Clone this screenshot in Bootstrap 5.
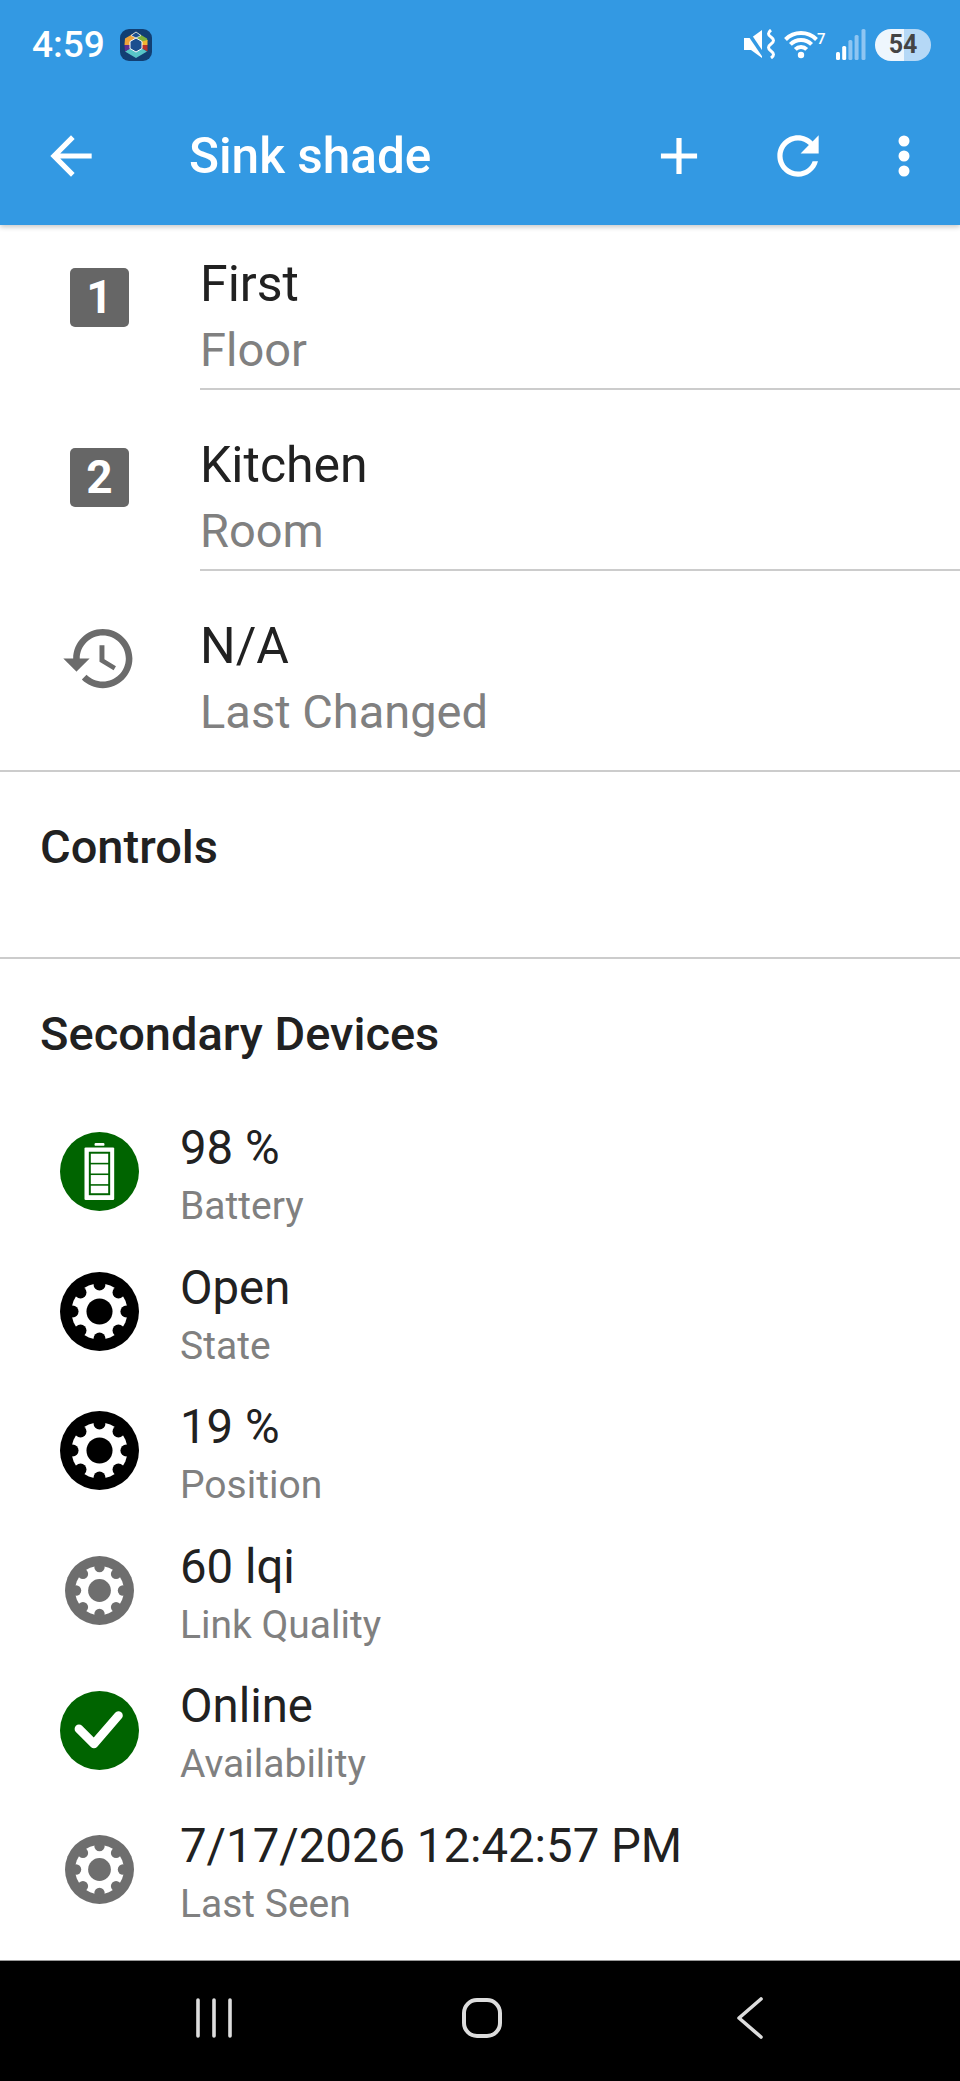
<!DOCTYPE html>
<html lang="en">
<head>
  <meta charset="UTF-8">
  <meta name="viewport" content="width=device-width, initial-scale=1.0">
  <title>Sink shade</title>
  <link href="https://cdn.jsdelivr.net/npm/bootstrap@5.3.1/dist/css/bootstrap.min.css" rel="stylesheet">
  <style>
    html, body { height: 100%; }
    body { font-family: Roboto, "Liberation Sans", sans-serif; color: #212121; background: #fff; width: 960px; height: 2081px; overflow: hidden; }
    .phone-wrap { height: 2081px; }

    /* app bar */
    .app-top { background: #3399e3; color: #fff; height: 225px; box-shadow: 0 2px 5px rgba(0,0,0,.22); position: relative; z-index: 2; }
    .status-row { height: 90px; padding: 29px 29px 0 32px; }
    .clock { font-size: 37px; font-weight: 500; line-height: 32px; width: 88px; }
    .batt-pill { width: 56px; height: 32px; border-radius: 16px; background: linear-gradient(90deg, #eef6fd 52%, #b5d8f6 52%); color: #444; font-size: 25px; font-weight: 700; line-height: 32px; text-align: center; }
    .tool-row { height: 135px; padding: 0 26px 4px 40px; }
    .page-title { font-size: 49.5px; font-weight: 500; line-height: 60px; margin: 0 0 0 87px; }
    .tool-btn { width: 62px; height: 62px; fill: #fff; }
    .gap-plus { margin-right: 57px; }
    .gap-refresh { margin-right: 68px; }
    .dots-icon { width: 14px; height: 62px; fill: #fff; margin-right: 23px; }

    /* detail rows */
    .detail-row { padding-left: 60px; }
    .detail-icon { width: 79px; flex: 0 0 79px; height: 79px; margin-right: 61px; }
    .num-box { width: 59px; height: 59px; border-radius: 5px; background: #666; color: #fff; font-size: 46px; font-weight: 700; line-height: 59px; text-align: center; }
    .hist-icon { width: 79px; height: 79px; fill: #6b6b6b; display: block; }
    .detail-text { padding-top: 43px; padding-bottom: 6px; border-bottom: 2px solid #ccc; }
    .detail-row:first-child .detail-text { padding-top: 27px; }
    .detail-row:first-child .detail-icon { margin-top: 33px; }
    .detail-row .detail-icon { margin-top: 48px; }
    .detail-row:last-child .detail-text { border-bottom: 0; padding-bottom: 26px; }
    .line-main { font-size: 50px; line-height: 65px; color: #212121; }
    .line-sub { font-size: 47px; line-height: 65px; color: #808080; }

    /* sections */
    .sect-block { border-top: 2px solid #ccc; padding: 45px 40px 0; }
    .sect-title { font-size: 47px; font-weight: 500; line-height: 60px; margin: 0; color: #212121; }
    .controls-block { height: 187px; }
    .device-list { margin-top: 38px; padding-left: 20px; }
    .device-row { height: 139.6px; }
    .device-slot { width: 79px; flex: 0 0 79px; margin-right: 41px; }
    .device-icon { display: block; }
    .disc-big { width: 79px; height: 79px; }
    .disc-small { width: 69px; height: 69px; }
    .grey-gear { color: #6e6e6e; }
    .device-text { padding-top: 17px; }
    .dev-main { font-size: 47.3px; line-height: 58px; color: #212121; }
    .dev-sub { font-size: 39px; line-height: 58px; color: #808080; }

    /* bottom nav */
    .nav-bottom { background: #000; height: 121px; border-top: 1px solid #999; padding: 0 0 7px 4px; }
    .nav-slot { width: 268px; }
    .nav-icon { stroke: #ddd; fill: none; display: block; }
  </style>
</head>

<body>
  <svg width="0" height="0" class="position-absolute">
    <symbol id="gear" viewBox="0 0 100 100">
      <circle cx="50" cy="50" r="50" fill="currentColor"/>
      <circle cx="50" cy="50" r="35.5" fill="#fff"/>
      <g fill="currentColor">
        <circle cx="50" cy="50" r="16.5"/>
        <circle cx="50" cy="16" r="7.5"/>
        <circle cx="50" cy="84" r="7.5"/>
        <circle cx="16" cy="50" r="7.5"/>
        <circle cx="84" cy="50" r="7.5"/>
        <circle cx="26" cy="26" r="7.5"/>
        <circle cx="74" cy="26" r="7.5"/>
        <circle cx="26" cy="74" r="7.5"/>
        <circle cx="74" cy="74" r="7.5"/>
      </g>
    </symbol>
  </svg>

  <div class="phone-wrap d-flex flex-column">
    <header class="app-top flex-shrink-0">
      <div class="status-row d-flex align-items-start">
        <span class="clock">4:59</span>
        <svg width="32" height="32" viewBox="0 0 32 32">
          <rect width="32" height="32" rx="9" fill="#123f73"/>
          <polygon points="5,9.5 16,3 16,9 10,12.5 10,16 4.5,16" fill="#f0a33a"/>
          <polygon points="16,3 27,9.5 27.5,12 22,13 16,9" fill="#7fb13c"/>
          <polygon points="11,6.5 16,3 21,6.5 16,9" fill="#1c4f8f" stroke="#fff" stroke-width=".7"/>
          <polygon points="27.5,11 27.5,16 22,16 22,12.5" fill="#f2b632"/>
          <polygon points="27.5,16 27.5,22.5 22,19.5 22,16" fill="#b8342c"/>
          <polygon points="27,22.5 16,29 5,22.5 10,19.5 16,23 22,19.5" fill="#58c5c8"/>
          <polygon points="4.5,16 10,16 10,19.5 5,22.5" fill="#5e2f92"/>
          <polygon points="16,9 22,12.5 22,19.5 16,23 10,19.5 10,12.5" fill="#1c4f8f" stroke="#fff" stroke-width="1"/>
        </svg>
        <div class="ms-auto d-flex align-items-start">
          <!-- mute + vibrate -->
          <svg width="32" height="30" viewBox="0 0 32 30" class="me-2">
            <path d="M0 9H7L18 1V29L7 21H0Z" fill="#fff"/>
            <line x1="1" y1="-1" x2="22" y2="30" stroke="#3399e3" stroke-width="3.5"/>
            <path d="M27 1q-5 4 0 7q5 3.5 0 7q-5 3.5 0 7q5 3.5 0 7" fill="none" stroke="#fff" stroke-width="3"/>
          </svg>
          <!-- wifi -->
          <svg width="44" height="30" viewBox="0 0 44 30" class="me-2">
            <g fill="none" stroke="#fff" stroke-width="4">
              <path d="M1.5 10.5A22 22 0 0 1 32.5 10.5"/>
              <path d="M6.4 15.4A15 15 0 0 1 27.6 15.4"/>
              <path d="M11.3 20.3A8 8 0 0 1 22.7 20.3"/>
            </g>
            <circle cx="17" cy="26" r="3.2" fill="#fff"/>
            <text x="33" y="14.5" font-size="15" font-weight="500" fill="#fff">7</text>
          </svg>
          <!-- signal -->
          <svg width="31" height="31" viewBox="0 0 31 31" class="me-2">
            <rect x="0" y="23" width="4" height="8" rx="1.5" fill="#fff"/>
            <rect x="6.2" y="17" width="4" height="14" rx="1.5" fill="#fff"/>
            <rect x="12.4" y="11" width="4" height="20" rx="1.5" fill="#8ec5f2"/>
            <rect x="18.6" y="6" width="4" height="25" rx="1.5" fill="#8ec5f2"/>
            <rect x="25.5" y="0" width="4" height="31" rx="1.5" fill="#8ec5f2"/>
          </svg>
          <div class="batt-pill">54</div>
        </div>
      </div>
      <div class="tool-row d-flex align-items-center">
        <svg class="tool-btn" viewBox="0 0 24 24"><path d="M20 11H7.83l5.59-5.59L12 4l-8 8 8 8 1.41-1.41L7.83 13H20v-2z"/></svg>
        <h1 class="page-title">Sink shade</h1>
        <svg class="tool-btn ms-auto gap-plus" viewBox="0 0 24 24"><path d="M19 13h-6v6h-2v-6H5v-2h6V5h2v6h6v2z"/></svg>
        <svg class="tool-btn gap-refresh" viewBox="0 0 24 24"><path d="M17.65 6.35C16.2 4.9 14.21 4 12 4c-4.42 0-7.99 3.58-7.99 8s3.57 8 7.99 8c3.73 0 6.84-2.55 7.73-6h-2.08c-.82 2.33-3.04 4-5.65 4-3.31 0-6-2.69-6-6s2.69-6 6-6c1.66 0 3.14.69 4.22 1.78L13 11h7V4l-2.35 2.35z"/></svg>
        <svg class="dots-icon" viewBox="0 0 14 62"><circle cx="7" cy="16" r="5.5"/><circle cx="7" cy="31" r="5.5"/><circle cx="7" cy="46" r="5.5"/></svg>
      </div>
    </header>

    <main class="flex-grow-1 overflow-hidden">
      <div class="detail-list">
        <div class="detail-row d-flex">
          <div class="detail-icon d-flex justify-content-center align-items-center"><div class="num-box">1</div></div>
          <div class="detail-text flex-grow-1">
            <div class="line-main">First</div>
            <div class="line-sub">Floor</div>
          </div>
        </div>
        <div class="detail-row d-flex">
          <div class="detail-icon d-flex justify-content-center align-items-center"><div class="num-box">2</div></div>
          <div class="detail-text flex-grow-1">
            <div class="line-main">Kitchen</div>
            <div class="line-sub">Room</div>
          </div>
        </div>
        <div class="detail-row d-flex">
          <div class="detail-icon">
            <svg class="hist-icon" viewBox="0 0 24 24"><path d="M13 3c-4.97 0-9 4.03-9 9H1l3.89 3.89.07.14L9 12H6c0-3.87 3.13-7 7-7s7 3.13 7 7-3.13 7-7 7c-1.93 0-3.68-.79-4.94-2.06l-1.42 1.42C8.27 19.99 10.51 21 13 21c4.97 0 9-4.03 9-9s-4.03-9-9-9zm-1 5v5l4.28 2.54.72-1.21-3.5-2.08V8H12z"/></svg>
          </div>
          <div class="detail-text flex-grow-1">
            <div class="line-main">N/A</div>
            <div class="line-sub">Last Changed</div>
          </div>
        </div>
      </div>

      <section class="sect-block controls-block">
        <h2 class="sect-title">Controls</h2>
      </section>

      <section class="sect-block">
        <h2 class="sect-title">Secondary Devices</h2>
        <div class="device-list">
          <div class="device-row d-flex">
            <div class="device-slot d-flex justify-content-center align-items-center">
              <svg class="device-icon disc-big" viewBox="0 0 100 100">
                <circle cx="50" cy="50" r="50" fill="#006400"/>
                <rect x="43.7" y="14" width="12.6" height="3.5" rx="1.5" fill="#fff"/>
                <rect x="31" y="19.5" width="37.6" height="66.5" rx="1.5" fill="#fff"/>
                <rect x="36.5" y="25" width="27" height="55" fill="#006400"/>
                <rect x="39" y="27.5" width="22" height="11.5" fill="#fff"/>
                <rect x="39" y="41" width="22" height="11.5" fill="#fff"/>
                <rect x="39" y="54.5" width="22" height="11.5" fill="#fff"/>
                <rect x="39" y="68" width="22" height="9.5" fill="#fff"/>
              </svg>
            </div>
            <div class="device-text">
              <div class="dev-main">98 %</div>
              <div class="dev-sub">Battery</div>
            </div>
          </div>
          <div class="device-row d-flex">
            <div class="device-slot d-flex justify-content-center align-items-center">
              <svg class="device-icon disc-big text-black"><use href="#gear"/></svg>
            </div>
            <div class="device-text">
              <div class="dev-main">Open</div>
              <div class="dev-sub">State</div>
            </div>
          </div>
          <div class="device-row d-flex">
            <div class="device-slot d-flex justify-content-center align-items-center">
              <svg class="device-icon disc-big text-black"><use href="#gear"/></svg>
            </div>
            <div class="device-text">
              <div class="dev-main">19 %</div>
              <div class="dev-sub">Position</div>
            </div>
          </div>
          <div class="device-row d-flex">
            <div class="device-slot d-flex justify-content-center align-items-center">
              <svg class="device-icon disc-small grey-gear"><use href="#gear"/></svg>
            </div>
            <div class="device-text">
              <div class="dev-main">60 lqi</div>
              <div class="dev-sub">Link Quality</div>
            </div>
          </div>
          <div class="device-row d-flex">
            <div class="device-slot d-flex justify-content-center align-items-center">
              <svg class="device-icon disc-big" viewBox="0 0 100 100">
                <circle cx="50" cy="50" r="50" fill="#006400"/>
                <polyline points="24,48 43,67 74,31" fill="none" stroke="#fff" stroke-width="11" stroke-linecap="round" stroke-linejoin="round"/>
              </svg>
            </div>
            <div class="device-text">
              <div class="dev-main">Online</div>
              <div class="dev-sub">Availability</div>
            </div>
          </div>
          <div class="device-row d-flex">
            <div class="device-slot d-flex justify-content-center align-items-center">
              <svg class="device-icon disc-small grey-gear"><use href="#gear"/></svg>
            </div>
            <div class="device-text">
              <div class="dev-main">7/17/2026 12:42:57 PM</div>
              <div class="dev-sub">Last Seen</div>
            </div>
          </div>
        </div>
      </section>
    </main>

    <nav class="nav-bottom flex-shrink-0 d-flex justify-content-center align-items-center">
      <div class="nav-slot d-flex justify-content-center">
        <svg class="nav-icon" width="40" height="40" viewBox="0 0 40 40" stroke-width="3.6" stroke-linecap="round">
          <path d="M4 2V38M20 2V38M36 2V38"/>
        </svg>
      </div>
      <div class="nav-slot d-flex justify-content-center">
        <svg class="nav-icon" width="40" height="40" viewBox="0 0 40 40" stroke-width="4">
          <rect x="2" y="2" width="36" height="36" rx="13"/>
        </svg>
      </div>
      <div class="nav-slot d-flex justify-content-center">
        <svg class="nav-icon" width="28" height="42" viewBox="0 0 28 42" stroke-width="3.6" stroke-linecap="round" stroke-linejoin="round">
          <path d="M25 2L3 21L25 40"/>
        </svg>
      </div>
    </nav>
  </div>
</body>
</html>
